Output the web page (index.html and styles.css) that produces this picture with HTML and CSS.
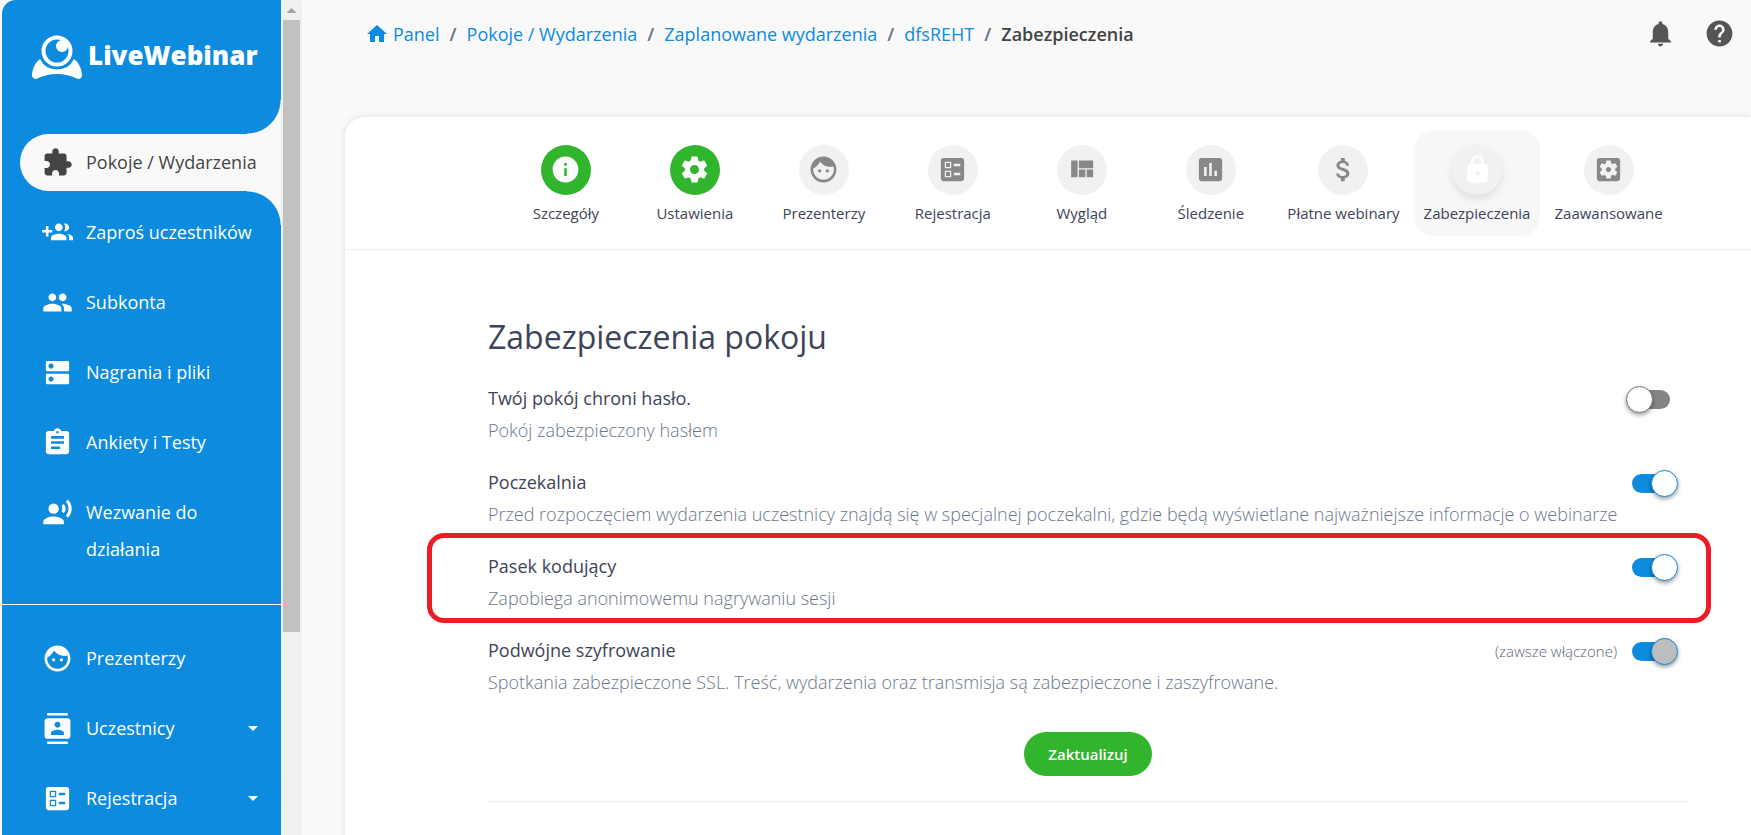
FILE: index.html
```html
<!DOCTYPE html>
<html lang="pl">
<head>
    <meta charset="UTF-8">
    <meta name="viewport" content="width=device-width, initial-scale=1.0">
    <title>Zabezpieczenia - LiveWebinar</title>
    <link rel="stylesheet" href="styles.css">
</head>
<body>
    <svg class="sprite" aria-hidden="true">
        <symbol id="i-rooms" viewBox="0 0 24 24"><path d="M20.5 11H19V7c0-1.1-.9-2-2-2h-4V3.5C13 2.12 11.88 1 10.5 1S8 2.12 8 3.5V5H4c-1.1 0-1.99.9-1.99 2v3.8H3.5c1.49 0 2.7 1.21 2.7 2.7s-1.21 2.7-2.7 2.7H2V20c0 1.1.9 2 2 2h3.8v-1.5c0-1.49 1.21-2.7 2.7-2.7 1.49 0 2.7 1.21 2.7 2.7V22H17c1.1 0 2-.9 2-2v-4h1.5c1.38 0 2.5-1.12 2.5-2.5S21.88 11 20.5 11z"/></symbol>
        <symbol id="i-invite" viewBox="0 0 24 24"><path d="M8 10H5V7H3v3H0v2h3v3h2v-3h3v-2zm10 1c1.66 0 2.99-1.34 2.99-3S19.66 5 18 5c-.32 0-.63.05-.91.14.57.81.9 1.79.9 2.86s-.34 2.04-.9 2.86c.28.09.59.14.91.14zm-5 0c1.66 0 2.99-1.34 2.99-3S14.66 5 13 5c-1.66 0-3 1.34-3 3s1.34 3 3 3zm6.62 2.16c.83.73 1.38 1.66 1.38 2.84v2h3v-2c0-1.54-2.37-2.49-4.38-2.84zM13 13c-2 0-6 1-6 3v2h12v-2c0-2-4-3-6-3z"/></symbol>
        <symbol id="i-people" viewBox="0 0 24 24"><path d="M16 11c1.66 0 2.99-1.34 2.99-3S17.66 5 16 5c-1.66 0-3 1.34-3 3s1.34 3 3 3zm-8 0c1.66 0 2.99-1.34 2.99-3S9.66 5 8 5C6.34 5 5 6.34 5 8s1.34 3 3 3zm0 2c-2.33 0-7 1.17-7 3.5V19h14v-2.5c0-2.33-4.67-3.5-7-3.5zm8 0c-.29 0-.62.02-.97.05 1.16.84 1.97 1.97 1.97 3.45V19h6v-2.5c0-2.33-4.67-3.5-7-3.5z"/></symbol>
        <symbol id="i-files" viewBox="0 0 24 24"><path d="M20 13H4c-.55 0-1 .45-1 1v6c0 .55.45 1 1 1h16c.55 0 1-.45 1-1v-6c0-.55-.45-1-1-1zM7 19c-1.1 0-2-.9-2-2s.9-2 2-2 2 .9 2 2-.9 2-2 2zM20 3H4c-.55 0-1 .45-1 1v6c0 .55.45 1 1 1h16c.55 0 1-.45 1-1V4c0-.55-.45-1-1-1zM7 9c-1.1 0-2-.9-2-2s.9-2 2-2 2 .9 2 2-.9 2-2 2z"/></symbol>
        <symbol id="i-tests" viewBox="0 0 24 24"><path d="M19 3h-4.18C14.4 1.84 13.3 1 12 1c-1.3 0-2.4.84-2.82 2H5c-1.1 0-2 .9-2 2v14c0 1.1.9 2 2 2h14c1.1 0 2-.9 2-2V5c0-1.1-.9-2-2-2zm-7 0c.55 0 1 .45 1 1s-.45 1-1 1-1-.45-1-1 .45-1 1-1zm2 14H7v-2h7v2zm3-4H7v-2h10v2zm0-4H7V7h10v2z"/></symbol>
        <symbol id="i-voice" viewBox="0 0 24 24"><circle cx="9" cy="9" r="4"/><path d="M9 15c-2.67 0-8 1.34-8 4v2h16v-2c0-2.66-5.33-4-8-4zm7.76-9.64l-1.68 1.69c.84 1.18.84 2.71 0 3.89l1.68 1.69c2.02-2.02 2.02-5.07 0-7.27zM20.07 2l-1.63 1.63c2.77 3.02 2.77 7.56 0 10.74L20.07 16c3.9-3.89 3.91-9.95 0-14z"/></symbol>
        <symbol id="i-face" viewBox="0 0 24 24"><path d="M9 11.75c-.69 0-1.25.56-1.25 1.25s.56 1.25 1.25 1.25 1.25-.56 1.25-1.25-.56-1.25-1.25-1.25zm6 0c-.69 0-1.25.56-1.25 1.25s.56 1.25 1.25 1.25 1.25-.56 1.25-1.25-.56-1.25-1.25-1.25zM12 2C6.48 2 2 6.48 2 12s4.48 10 10 10 10-4.48 10-10S17.52 2 12 2zm0 18c-4.41 0-8-3.59-8-8 0-.29.02-.58.05-.86 2.36-1.05 4.23-2.98 5.21-5.37C11.07 8.33 14.05 10 17.42 10c.78 0 1.53-.09 2.25-.26.21.71.33 1.47.33 2.26 0 4.41-3.59 8-8 8z"/></symbol>
        <symbol id="i-contacts" viewBox="0 0 24 24"><path d="M20 0H4v2h16V0zM4 24h16v-2H4v2zM20 4H4c-1.1 0-2 .9-2 2v12c0 1.1.9 2 2 2h16c1.1 0 2-.9 2-2V6c0-1.1-.9-2-2-2zm-8 2.75c1.24 0 2.25 1.01 2.25 2.25s-1.01 2.25-2.25 2.25S9.75 10.24 9.75 9 10.76 6.75 12 6.75zM17 17H7v-1.5c0-1.67 3.33-2.5 5-2.5s5 .83 5 2.5V17z"/></symbol>
        <symbol id="i-ballot" viewBox="0 0 24 24"><path fill-rule="evenodd" d="M13 9.5h5v-2h-5v2zm0 7h5v-2h-5v2zm6 4.5H5c-1.1 0-2-.9-2-2V5c0-1.1.9-2 2-2h14c1.1 0 2 .9 2 2v14c0 1.1-.9 2-2 2zM6 11h5V6H6v5zm1-4h3v3H7V7zM6 18h5v-5H6v5zm1-4h3v3H7v-3z"/></symbol>
        <symbol id="i-caret" viewBox="0 0 24 24"><path d="M7 10l5 5 5-5z"/></symbol>
        <symbol id="i-home" viewBox="0 0 24 24"><path d="M10 20v-6h4v6h5v-8h3L12 3 2 12h3v8z"/></symbol>
        <symbol id="i-bell" viewBox="0 0 24 24"><path d="M12 22c1.1 0 2-.9 2-2h-4c0 1.1.89 2 2 2zm6-6v-5c0-3.07-1.64-5.64-4.5-6.32V4c0-.83-.67-1.5-1.5-1.5s-1.5.67-1.5 1.5v.68C7.63 5.36 6 7.92 6 11v5l-2 2v1h16v-1l-2-2z"/></symbol>
        <symbol id="i-help" viewBox="0 0 24 24"><path d="M12 2C6.48 2 2 6.48 2 12s4.48 10 10 10 10-4.48 10-10S17.52 2 12 2zm1 17h-2v-2h2v2zm2.07-7.75l-.9.92C13.45 12.9 13 13.5 13 15h-2v-.5c0-1.1.45-2.1 1.17-2.83l1.24-1.26c.37-.36.59-.86.59-1.41 0-1.1-.9-2-2-2s-2 .9-2 2H8c0-2.21 1.79-4 4-4s4 1.79 4 4c0 .88-.36 1.68-.93 2.25z"/></symbol>
        <symbol id="i-info" viewBox="0 0 24 24"><path d="M12 2C6.48 2 2 6.48 2 12s4.48 10 10 10 10-4.48 10-10S17.52 2 12 2zm1 15h-2v-6h2v6zm0-8h-2V7h2v2z"/></symbol>
        <symbol id="i-settings" viewBox="0 0 24 24"><path d="M19.43 12.98c.04-.32.07-.64.07-.98s-.03-.66-.07-.98l2.11-1.65c.19-.15.24-.42.12-.64l-2-3.46c-.12-.22-.39-.3-.61-.22l-2.49 1c-.52-.4-1.08-.73-1.69-.98l-.38-2.65C14.46 2.18 14.25 2 14 2h-4c-.25 0-.46.18-.49.42l-.38 2.65c-.61.25-1.17.59-1.69.98l-2.49-1c-.23-.09-.49 0-.61.22l-2 3.46c-.13.22-.07.49.12.64l2.11 1.65c-.04.32-.07.65-.07.98s.03.66.07.98l-2.11 1.65c-.19.15-.24.42-.12.64l2 3.46c.12.22.39.3.61.22l2.49-1c.52.4 1.08.73 1.69.98l.38 2.65c.03.24.24.42.49.42h4c.25 0 .46-.18.49-.42l.38-2.65c.61-.25 1.17-.59 1.69-.98l2.49 1c.23.09.49 0 .61-.22l2-3.46c.12-.22.07-.49-.12-.64l-2.11-1.65zM12 15.5c-1.93 0-3.5-1.57-3.5-3.5s1.57-3.5 3.5-3.5 3.5 1.57 3.5 3.5-1.57 3.5-3.5 3.5z"/></symbol>
        <symbol id="i-layout" viewBox="0 0 24 24"><path d="M10 18h5v-6h-5v6zm-6 0h5V5H4v13zm12 0h5v-6h-5v6zM10 5v6h11V5H10z"/></symbol>
        <symbol id="i-chart" viewBox="0 0 24 24"><path d="M19 3H5c-1.1 0-2 .9-2 2v14c0 1.1.9 2 2 2h14c1.1 0 2-.9 2-2V5c0-1.1-.9-2-2-2zM9 17H7v-7h2v7zm4 0h-2V7h2v10zm4 0h-2v-4h2v4z"/></symbol>
        <symbol id="i-money" viewBox="0 0 24 24"><path d="M11.8 10.9c-2.27-.59-3-1.2-3-2.15 0-1.09 1.01-1.85 2.7-1.85 1.78 0 2.44.85 2.5 2.1h2.21c-.07-1.72-1.12-3.3-3.21-3.81V3h-3v2.16c-1.94.42-3.5 1.68-3.5 3.61 0 2.31 1.91 3.46 4.7 4.13 2.5.6 3 1.48 3 2.41 0 .69-.49 1.79-2.7 1.79-2.06 0-2.87-.92-2.98-2.1h-2.2c.12 2.19 1.76 3.42 3.68 3.83V21h3v-2.15c1.95-.37 3.5-1.5 3.5-3.55 0-2.84-2.43-3.81-4.7-4.4z"/></symbol>
        <symbol id="i-lock" viewBox="0 0 24 24"><path d="M18 8h-1V6c0-2.76-2.24-5-5-5S7 3.24 7 6v2H6c-1.1 0-2 .9-2 2v10c0 1.1.9 2 2 2h12c1.1 0 2-.9 2-2V10c0-1.1-.9-2-2-2zm-6 9c-1.1 0-2-.9-2-2s.9-2 2-2 2 .9 2 2-.9 2-2 2zm3.1-9H8.9V6c0-1.71 1.39-3.1 3.1-3.1 1.71 0 3.1 1.39 3.1 3.1v2z"/></symbol>
        <symbol id="i-advanced" viewBox="0 0 24 24"><path d="M12 10c-1.1 0-2 .9-2 2s.9 2 2 2 2-.9 2-2-.9-2-2-2zm7-7H5c-1.11 0-2 .9-2 2v14c0 1.1.89 2 2 2h14c1.11 0 2-.9 2-2V5c0-1.1-.89-2-2-2zm-1.75 9c0 .23-.02.46-.05.68l1.48 1.16c.13.11.17.3.08.45l-1.4 2.42c-.09.15-.27.21-.43.15l-1.74-.7c-.36.28-.76.51-1.18.69l-.26 1.85c-.03.17-.18.3-.35.3h-2.8c-.17 0-.32-.13-.35-.29l-.26-1.85c-.43-.18-.82-.41-1.18-.69l-1.74.7c-.16.06-.34 0-.43-.15l-1.4-2.42c-.09-.15-.05-.34.08-.45l1.48-1.16c-.03-.23-.05-.46-.05-.69 0-.23.02-.46.05-.68l-1.48-1.16c-.13-.11-.17-.3-.08-.45l1.4-2.42c.09-.15.27-.21.43-.15l1.74.7c.36-.28.76-.51 1.18-.69l.26-1.85c.03-.17.18-.3.35-.3h2.8c.17 0 .32.13.35.29l.26 1.85c.43.18.82.41 1.18.69l1.74-.7c.16-.06.34 0 .43.15l1.4 2.42c.09.15.05.34-.08.45l-1.48 1.16c.03.23.05.46.05.69z"/></symbol>
    </svg>

    <div class="app">
        <aside class="sidebar">
            <a class="logo" href="#">
                <svg class="logo-mark" viewBox="0 0 50 44" aria-hidden="true">
                    <circle cx="25" cy="16" r="13.5" fill="none" stroke="#fff" stroke-width="4"/>
                    <circle cx="30" cy="11" r="6"/>
                    <path d="M8 24A19 19 0 0 0 42 24C46 27 50 33 50 41Q49 44 46 44Q25 34 4 44Q1 44 0 41C0 33 4 27 8 24z"/>
                </svg>
                <span class="logo-text">LiveWebinar</span>
            </a>
            <nav class="menu">
                <a class="menu-item active" href="#"><svg class="icon"><use href="#i-rooms"/></svg><span>Pokoje / Wydarzenia</span></a>
                <a class="menu-item" href="#"><svg class="icon"><use href="#i-invite"/></svg><span>Zaproś uczestników</span></a>
                <a class="menu-item" href="#"><svg class="icon"><use href="#i-people"/></svg><span>Subkonta</span></a>
                <a class="menu-item" href="#"><svg class="icon"><use href="#i-files"/></svg><span>Nagrania i pliki</span></a>
                <a class="menu-item" href="#"><svg class="icon"><use href="#i-tests"/></svg><span>Ankiety i Testy</span></a>
                <a class="menu-item" href="#"><svg class="icon"><use href="#i-voice"/></svg><span>Wezwanie do działania</span></a>
            </nav>
            <nav class="menu menu-second">
                <a class="menu-item" href="#"><svg class="icon"><use href="#i-face"/></svg><span>Prezenterzy</span></a>
                <a class="menu-item" href="#"><svg class="icon"><use href="#i-contacts"/></svg><span>Uczestnicy</span><svg class="caret"><use href="#i-caret"/></svg></a>
                <a class="menu-item" href="#"><svg class="icon"><use href="#i-ballot"/></svg><span>Rejestracja</span><svg class="caret"><use href="#i-caret"/></svg></a>
            </nav>
        </aside>
        <div class="scrollbar">
            <div class="scroll-arrow"></div>
            <div class="scroll-thumb"></div>
        </div>

        <main class="main">
            <header class="topbar">
                <nav class="breadcrumb">
                    <a class="crumb-home" href="#"><svg class="home-icon"><use href="#i-home"/></svg>Panel</a>
                    <span class="sep">/</span>
                    <a href="#">Pokoje / Wydarzenia</a>
                    <span class="sep">/</span>
                    <a href="#">Zaplanowane wydarzenia</a>
                    <span class="sep">/</span>
                    <a href="#">dfsREHT</a>
                    <span class="sep">/</span>
                    <span class="current">Zabezpieczenia</span>
                </nav>
                <div class="actions">
                    <button class="icon-btn" type="button" aria-label="Powiadomienia"><svg class="icon"><use href="#i-bell"/></svg></button>
                    <button class="icon-btn" type="button" aria-label="Pomoc"><svg class="icon"><use href="#i-help"/></svg></button>
                </div>
            </header>

            <section class="card">
                <nav class="steps">
                    <a class="step done" href="#"><span class="step-icon"><svg class="icon"><use href="#i-info"/></svg></span>Szczegóły</a>
                    <a class="step done" href="#"><span class="step-icon"><svg class="icon"><use href="#i-settings"/></svg></span>Ustawienia</a>
                    <a class="step" href="#"><span class="step-icon"><svg class="icon"><use href="#i-face"/></svg></span>Prezenterzy</a>
                    <a class="step" href="#"><span class="step-icon"><svg class="icon"><use href="#i-ballot"/></svg></span>Rejestracja</a>
                    <a class="step" href="#"><span class="step-icon"><svg class="icon"><use href="#i-layout"/></svg></span>Wygląd</a>
                    <a class="step" href="#"><span class="step-icon"><svg class="icon"><use href="#i-chart"/></svg></span>Śledzenie</a>
                    <a class="step" href="#"><span class="step-icon"><svg class="icon"><use href="#i-money"/></svg></span>Płatne webinary</a>
                    <a class="step current-step" href="#"><span class="step-icon"><svg class="icon"><use href="#i-lock"/></svg></span>Zabezpieczenia</a>
                    <a class="step" href="#"><span class="step-icon"><svg class="icon"><use href="#i-advanced"/></svg></span>Zaawansowane</a>
                </nav>

                <form class="settings">
                    <h1>Zabezpieczenia pokoju</h1>
                    <div class="row">
                        <div class="row-text">
                            <label for="password">Twój pokój chroni hasło.</label>
                            <p>Pokój zabezpieczony hasłem</p>
                        </div>
                        <div class="row-control"><input class="switch" type="checkbox" id="password"></div>
                    </div>
                    <div class="row">
                        <div class="row-text">
                            <label for="waiting">Poczekalnia</label>
                            <p>Przed rozpoczęciem wydarzenia uczestnicy znajdą się w specjalnej poczekalni, gdzie będą wyświetlane najważniejsze informacje o webinarze</p>
                        </div>
                        <div class="row-control"><input class="switch" type="checkbox" id="waiting" checked></div>
                    </div>
                    <div class="row highlight">
                        <div class="row-text">
                            <label for="codebar">Pasek kodujący</label>
                            <p>Zapobiega anonimowemu nagrywaniu sesji</p>
                        </div>
                        <div class="row-control"><input class="switch" type="checkbox" id="codebar" checked></div>
                    </div>
                    <div class="row">
                        <div class="row-text">
                            <label for="encryption">Podwójne szyfrowanie</label>
                            <p>Spotkania zabezpieczone SSL. Treść, wydarzenia oraz transmisja są zabezpieczone i zaszyfrowane.</p>
                        </div>
                        <div class="row-control"><span class="note">(zawsze włączone)</span><input class="switch" type="checkbox" id="encryption" checked disabled></div>
                    </div>
                    <button class="submit" type="button">Zaktualizuj</button>
                    <hr>
                </form>
            </section>
        </main>
    </div>
</body>
</html>
```

FILE: styles.css
```css
* {
    box-sizing: border-box;
}
body {
    font-family: "Open Sans", "Noto Sans", sans-serif;
    font-size: 18px;
    margin: 0;
    color: #3d4459;
    background-color: #f9f9f9;
}
a {
    color: #0c8bdf;
    text-decoration: none;
}
svg {
    fill: currentColor;
    flex: none;
}
.sprite {
    display: none;
}
.icon {
    width: 31px;
    height: 31px;
}
.app {
    display: flex;
    height: 100vh;
    overflow: hidden;
    padding-left: 2px;
}

/* sidebar */
.sidebar {
    flex: none;
    width: 279px;
    overflow: hidden;
    background-color: #0c8bdf;
    border-top-left-radius: 14px;
}
.logo {
    display: flex;
    gap: 6px;
    height: 134px;
    padding: 35px 0 0 30px;
    color: white;
}
.logo-mark {
    width: 50px;
    height: 44px;
}
.logo-text {
    font-size: 26px;
    font-weight: 800;
    line-height: 40px;
}
.menu {
    padding-left: 18px;
}
.menu-second {
    border-top: 1px solid white;
    margin-top: 26px;
    padding-top: 25px;
}
.menu-item {
    display: flex;
    align-items: flex-start;
    gap: 13px;
    padding: 10px 16px 10px 22px;
    margin-bottom: 13px;
    line-height: 37px;
    color: white;
}
.menu-item .icon {
    margin-top: 3px;
}
.menu-item .caret {
    width: 24px;
    height: 24px;
    margin: 6px 0 0 auto;
}
.menu-item.active {
    position: relative;
    color: #444;
    background-color: #f9f9f9;
    border-radius: 29px 0 0 29px;
}
/* rounded cut-outs above and below the active item */
.menu-item.active::before,
.menu-item.active::after {
    content: "";
    position: absolute;
    right: 0;
    width: 34px;
    height: 34px;
}
.menu-item.active::before {
    bottom: 100%;
    background: radial-gradient(circle at 0 0, transparent 33px, #f9f9f9 34px);
}
.menu-item.active::after {
    top: 100%;
    background: radial-gradient(circle at 0 100%, transparent 33px, #f9f9f9 34px);
}
.scrollbar {
    flex: none;
    width: 21px;
    padding: 8px 2px 0;
    background-color: #f0f0f0;
}
.scroll-arrow {
    width: 10px;
    height: 5px;
    margin: 0 auto 7px;
    background-color: #a3a3a3;
    clip-path: polygon(50% 0, 100% 100%, 0 100%);
}
.scroll-thumb {
    height: 74%;
    background-color: #c1c1c1;
}

/* top bar */
.main {
    flex: 1;
    min-width: 0;
    padding-left: 43px;
}
.topbar {
    display: flex;
    justify-content: space-between;
    align-items: center;
    height: 117px;
    padding: 0 16px 50px 20px;
}
.breadcrumb {
    display: flex;
    align-items: center;
    gap: 10px;
}
.crumb-home {
    display: flex;
    gap: 4px;
}
.home-icon {
    width: 24px;
    height: 24px;
}
.sep {
    font-weight: 600;
    color: #687080;
}
.current {
    font-weight: 600;
    color: #444;
}
.actions {
    display: flex;
    gap: 28px;
}
.icon-btn {
    display: flex;
    padding: 0;
    border: none;
    background: none;
    color: #555;
    cursor: pointer;
}

/* card */
.card {
    min-height: 100%;
    background-color: white;
    border-top-left-radius: 20px;
    box-shadow: 0 0 6px rgba(0, 0, 0, 0.12);
}
.steps {
    display: flex;
    justify-content: center;
    gap: 4px;
    padding: 13px 63px 13px 143px;
    border-bottom: 1px solid #eee;
}
.step {
    display: flex;
    flex-direction: column;
    align-items: center;
    gap: 8px;
    min-width: 125px;
    height: 106px;
    padding: 15px 10px 0;
    border-radius: 20px;
    font-size: 15px;
    line-height: 20px;
    white-space: nowrap;
    color: #3d4459;
}
.step-icon {
    display: flex;
    align-items: center;
    justify-content: center;
    width: 50px;
    height: 50px;
    padding-bottom: 2px;
    border-radius: 50%;
    color: #888;
    background-color: #f1f1f1;
}
.done .step-icon {
    color: white;
    background-color: #30b52c;
}
.current-step {
    background-color: #f7f7f7;
}
.current-step .step-icon {
    color: white;
    box-shadow: 0 4px 8px rgba(0, 0, 0, 0.1);
}
.settings {
    padding: 65px 63px 0 143px;
}
h1 {
    margin: 0 0 23px;
    font-size: 32px;
    font-weight: 400;
    line-height: 44px;
}
.row {
    position: relative;
    display: flex;
    justify-content: space-between;
    margin-bottom: 20px;
    line-height: 32px;
}
.row p {
    margin: 0;
    font-weight: 300;
    color: #6c778c;
}
.row-control {
    display: flex;
    align-items: center;
    gap: 15px;
    height: 34px;
    padding-right: 18px;
}
.note {
    font-size: 15px;
    font-weight: 300;
    color: #5c6478;
}
.highlight::after {
    content: "";
    position: absolute;
    inset: -17px -23px -9px -61px;
    border: 5px solid #ed1c24;
    border-radius: 17px;
    pointer-events: none;
}
.switch {
    appearance: none;
    position: relative;
    width: 38px;
    height: 19px;
    margin: 0;
    border-radius: 10px;
    background-color: #858585;
    cursor: pointer;
}
.switch::before {
    content: "";
    position: absolute;
    top: -4px;
    left: -6px;
    width: 25px;
    height: 25px;
    border: 1px solid #777;
    border-radius: 50%;
    background-color: white;
    box-shadow: 0 2px 4px rgba(0, 0, 0, 0.4);
}
.switch:checked {
    background-color: #0c8bdf;
}
.switch:checked::before {
    left: 19px;
    border-color: #0c8bdf;
}
.switch:disabled::before {
    background-color: #bdbdbd;
}
.submit {
    display: block;
    margin: 34px auto 25px;
    padding: 0 24px;
    height: 44px;
    border: none;
    border-radius: 22px;
    font-family: inherit;
    font-size: 15px;
    font-weight: 600;
    color: white;
    background-color: #30b52c;
    cursor: pointer;
}
hr {
    margin: 0;
    border: none;
    border-top: 1px solid #eee;
}
```
